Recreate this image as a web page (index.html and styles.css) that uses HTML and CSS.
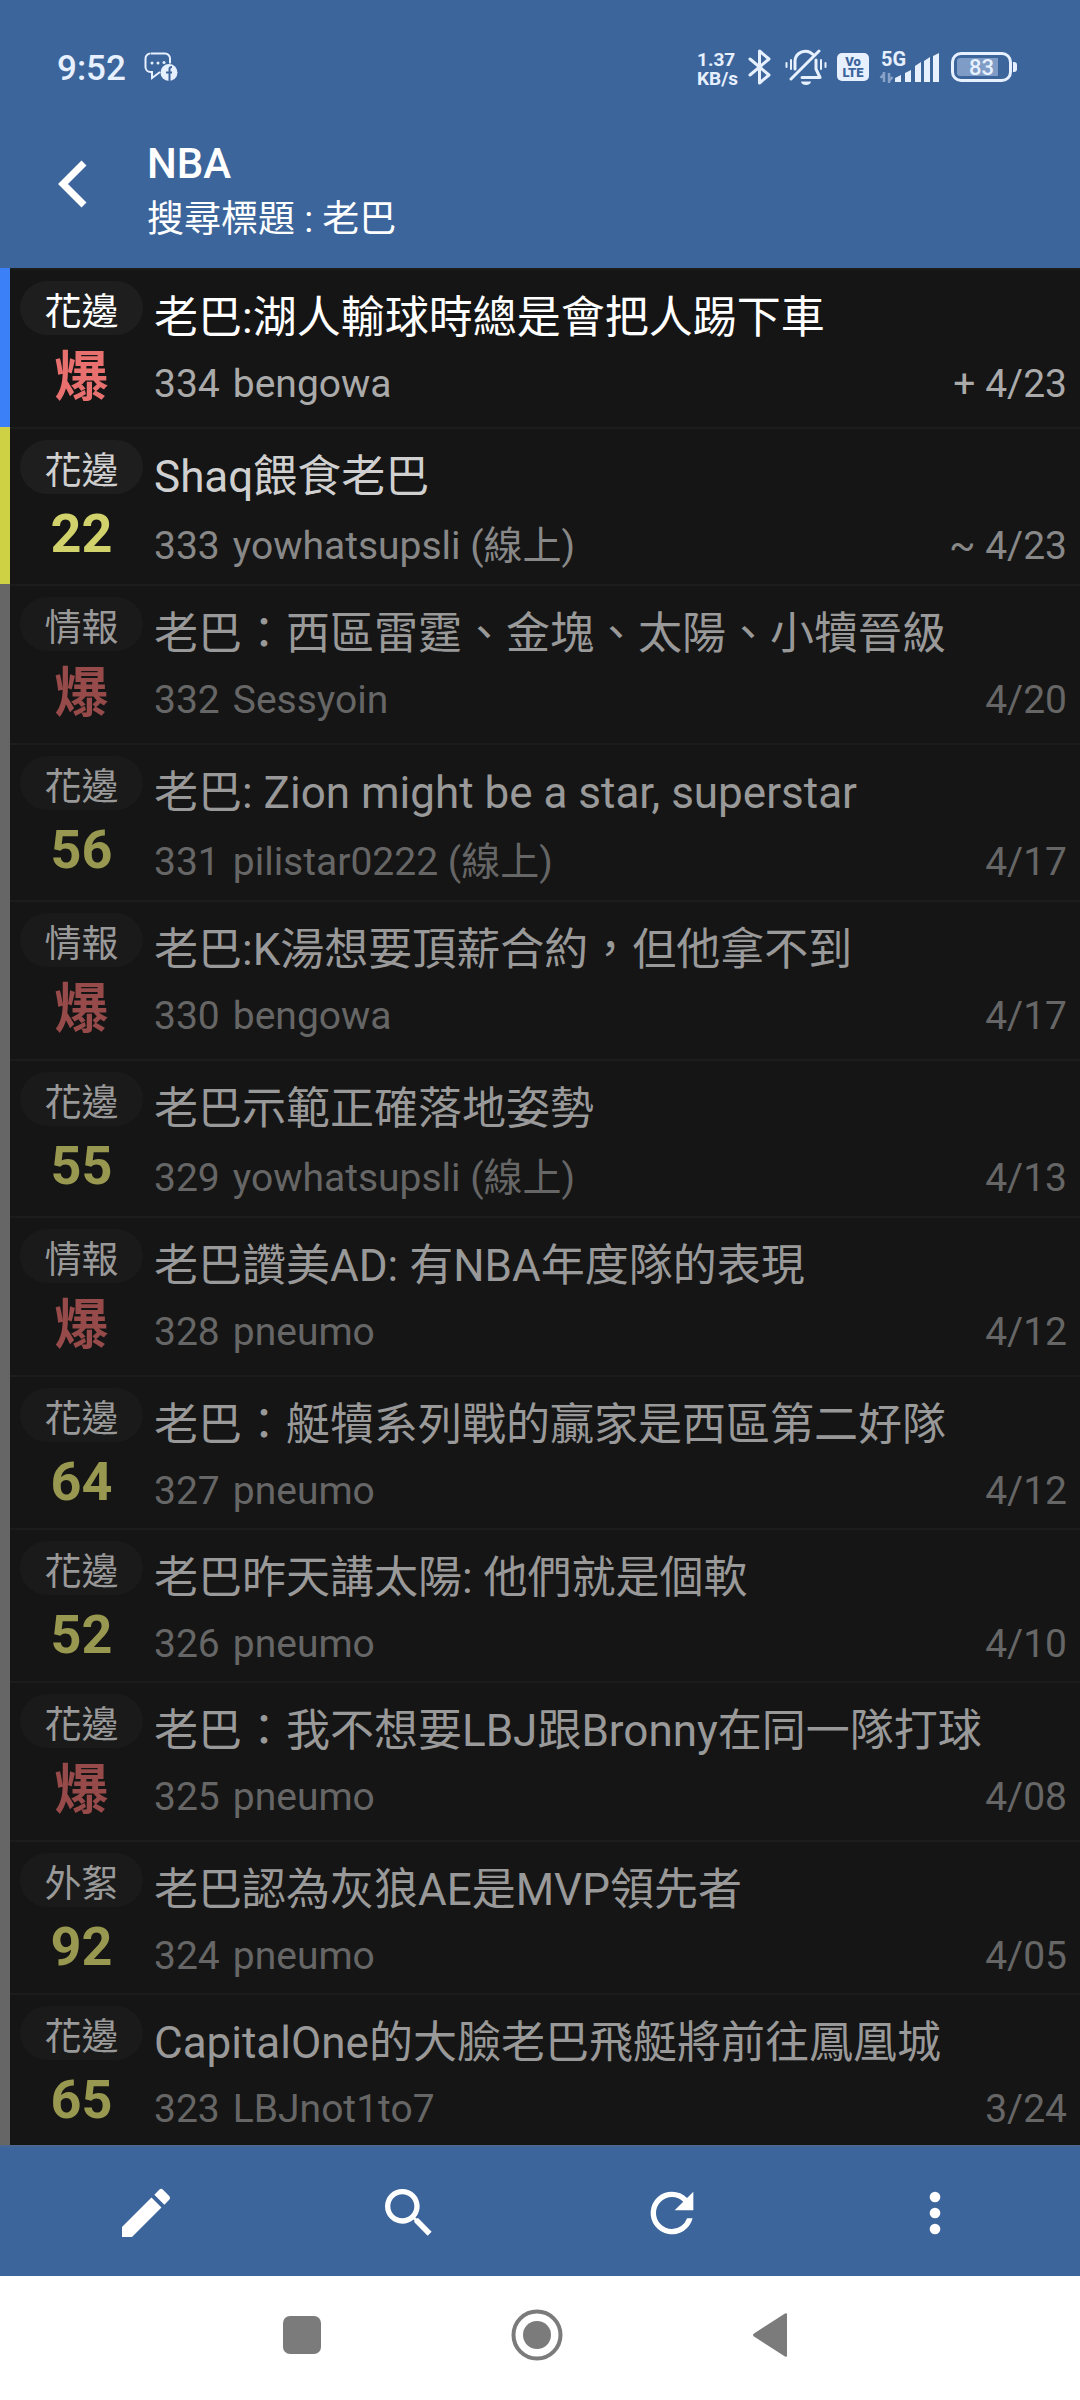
FILE: index.html
```html
<!DOCTYPE html>
<html lang="zh-Hant">
<head>
<meta charset="utf-8">
<meta name="viewport" content="width=device-width, initial-scale=1">
<title>NBA</title>
<link rel="stylesheet" href="styles.css">
</head>
<body>
<div class="app">
  <header class="header">
    <div class="status">
      <div class="status-left">
        <span class="clock">9:52</span>
        <svg class="chat" width="34" height="30" viewBox="0 0 34 30" aria-hidden="true">
          <path d="M7 1.500h14a5 5 0 0 1 5 5v5M16 20l-8 6v-6H6.500a5 5 0 0 1-5-5V6.500a5 5 0 0 1 5-5" fill="none" stroke="currentColor" stroke-width="2"/>
          <circle cx="8" cy="11" r="1.500"/><circle cx="14" cy="11" r="1.500"/><circle cx="20" cy="10.500" r="1.500"/>
          <circle cx="25" cy="20.500" r="8.500"/>
          <path d="M25.500 29v-12q0-2 2.500-2M22 20.500h6" fill="none" stroke="#3c659b" stroke-width="2"/>
        </svg>
      </div>
      <div class="status-right">
        <span class="speed"><span>1.37</span><span>KB/s</span></span>
        <svg class="line" width="27" height="38" viewBox="0 0 27 38" aria-hidden="true"><path d="M2 11l19 16-9.500 8V3L21 11 2 27" stroke-width="3"/></svg>
        <svg class="line" width="42" height="38" viewBox="0 0 42 38" aria-hidden="true">
          <path d="M10 21v-6.500a10.500 10.500 0 0 1 18-8M31 12v9l4 8.500H17M34 3L6 31" stroke-width="3"/>
          <path d="M1.500 15v4M6 12v9M36 12v9M40.500 15v4" stroke-width="2"/>
          <path d="M16 33.500h10a5 3.500 0 0 1-10 0z" fill="currentColor" stroke="none"/>
        </svg>
        <span class="volte"><span>Vo</span><span>LTE</span></span>
        <span class="signal">
          <span class="net">5G</span>
          <svg width="62" height="36" viewBox="0 0 62 36" aria-hidden="true">
            <path d="M5 23v10M1.500 29L5 25M10 24v10M10 32l3.500-4" stroke="currentColor" stroke-width="2.500" fill="none" opacity=".45"/>
            <path d="M16 29l6-3v7h-6zM26 24l6-3v12h-6zM36 17l6-4v20h-6zM45 12l6-4v25h-6zM54 7l6-3v29h-6z"/>
          </svg>
        </span>
        <span class="battery"><span class="battery-level">83</span></span>
      </div>
    </div>
    <div class="titlebar">
      <button class="back" type="button" aria-label="返回"><svg class="line" width="30" height="48" viewBox="0 0 30 48" aria-hidden="true"><path class="chevron" d="M27 3L6 24l21 21"/></svg></button>
      <div class="heading">
        <h1>NBA</h1>
        <p>搜尋標題 : 老巴</p>
      </div>
    </div>
  </header>

  <main class="list">
    <a class="row new" href="#334"><span class="side"><span class="tag">花邊</span><b class="score hot">爆</b></span><span class="main"><span class="title">老巴:湖人輸球時總是會把人踢下車</span><span class="meta"><span class="num">334</span><span>bengowa</span><span class="date">+ 4/23</span></span></span></a>
    <a class="row changed" href="#333"><span class="side"><span class="tag">花邊</span><b class="score">22</b></span><span class="main"><span class="title">Shaq餵食老巴</span><span class="meta online"><span class="num">333</span><span>yowhatsupsli (線上)</span><span class="date">~ 4/23</span></span></span></a>
    <a class="row" href="#332"><span class="side"><span class="tag">情報</span><b class="score hot">爆</b></span><span class="main"><span class="title">老巴：西區雷霆、金塊、太陽、小犢晉級</span><span class="meta"><span class="num">332</span><span>Sessyoin</span><span class="date">4/20</span></span></span></a>
    <a class="row" href="#331"><span class="side"><span class="tag">花邊</span><b class="score">56</b></span><span class="main"><span class="title">老巴: Zion might be a star, superstar</span><span class="meta online"><span class="num">331</span><span>pilistar0222 (線上)</span><span class="date">4/17</span></span></span></a>
    <a class="row" href="#330"><span class="side"><span class="tag">情報</span><b class="score hot">爆</b></span><span class="main"><span class="title">老巴:K湯想要頂薪合約，但他拿不到</span><span class="meta"><span class="num">330</span><span>bengowa</span><span class="date">4/17</span></span></span></a>
    <a class="row" href="#329"><span class="side"><span class="tag">花邊</span><b class="score">55</b></span><span class="main"><span class="title">老巴示範正確落地姿勢</span><span class="meta online"><span class="num">329</span><span>yowhatsupsli (線上)</span><span class="date">4/13</span></span></span></a>
    <a class="row" href="#328"><span class="side"><span class="tag">情報</span><b class="score hot">爆</b></span><span class="main"><span class="title">老巴讚美AD: 有NBA年度隊的表現</span><span class="meta"><span class="num">328</span><span>pneumo</span><span class="date">4/12</span></span></span></a>
    <a class="row" href="#327"><span class="side"><span class="tag">花邊</span><b class="score">64</b></span><span class="main"><span class="title">老巴：艇犢系列戰的贏家是西區第二好隊</span><span class="meta"><span class="num">327</span><span>pneumo</span><span class="date">4/12</span></span></span></a>
    <a class="row" href="#326"><span class="side"><span class="tag">花邊</span><b class="score">52</b></span><span class="main"><span class="title">老巴昨天講太陽: 他們就是個軟</span><span class="meta"><span class="num">326</span><span>pneumo</span><span class="date">4/10</span></span></span></a>
    <a class="row" href="#325"><span class="side"><span class="tag">花邊</span><b class="score hot">爆</b></span><span class="main"><span class="title">老巴：我不想要LBJ跟Bronny在同一隊打球</span><span class="meta"><span class="num">325</span><span>pneumo</span><span class="date">4/08</span></span></span></a>
    <a class="row" href="#324"><span class="side"><span class="tag">外絮</span><b class="score">92</b></span><span class="main"><span class="title">老巴認為灰狼AE是MVP領先者</span><span class="meta"><span class="num">324</span><span>pneumo</span><span class="date">4/05</span></span></span></a>
    <a class="row" href="#323"><span class="side"><span class="tag">花邊</span><b class="score">65</b></span><span class="main"><span class="title">CapitalOne的大臉老巴飛艇將前往鳳凰城</span><span class="meta"><span class="num">323</span><span>LBJnot1to7</span><span class="date">3/24</span></span></span></a>
  </main>

  <div class="toolbar">
    <button type="button" aria-label="發文"><svg viewBox="0 0 24 24" aria-hidden="true"><path d="M3 17.250V21h3.750L17.810 9.940l-3.750-3.750L3 17.250zM20.710 7.040a1 1 0 0 0 0-1.410l-2.340-2.340a1 1 0 0 0-1.410 0l-1.830 1.830 3.750 3.750 1.830-1.830z"/></svg></button>
    <button type="button" aria-label="搜尋"><svg viewBox="0 0 24 24" aria-hidden="true"><path d="M15.500 14h-.79l-.28-.27A6.471 6.471 0 0 0 16 9.500 6.500 6.500 0 1 0 9.500 16c1.610 0 3.090-.59 4.230-1.570l.27.28v.79l5 4.990L20.490 19l-4.990-5zm-6 0C7.010 14 5 11.990 5 9.500S7.010 5 9.500 5 14 7.010 14 9.500 11.990 14 9.500 14z"/></svg></button>
    <button type="button" aria-label="重新整理"><svg viewBox="0 0 24 24" aria-hidden="true"><path d="M17.650 6.350A7.958 7.958 0 0 0 12 4a8 8 0 1 0 7.730 10h-2.080A5.990 5.990 0 0 1 12 18a6 6 0 1 1 0-12c1.660 0 3.140.69 4.220 1.780L13 11h7V4l-2.350 2.350z"/></svg></button>
    <button type="button" aria-label="更多"><svg viewBox="0 0 24 24" aria-hidden="true"><path d="M12 8a2 2 0 1 0 0-4 2 2 0 0 0 0 4zm0 2a2 2 0 1 0 0 4 2 2 0 0 0 0-4zm0 6a2 2 0 1 0 0 4 2 2 0 0 0 0-4z"/></svg></button>
  </div>

  <nav class="navbar">
    <button type="button" aria-label="最近使用"><svg width="54" height="54" viewBox="0 0 54 54" aria-hidden="true"><rect x="8" y="8" width="38" height="38" rx="7"/></svg></button>
    <button type="button" aria-label="主畫面"><svg width="54" height="54" viewBox="0 0 54 54" aria-hidden="true"><circle cx="27" cy="27" r="23.500" fill="none" stroke="currentColor" stroke-width="4"/><circle cx="27" cy="27" r="14"/></svg></button>
    <button type="button" aria-label="返回上一頁"><svg width="54" height="54" viewBox="0 0 54 54" aria-hidden="true"><path d="M9 25.500L40 5.500q2-1 2 1v41q0 2-2 1L9 28.500q-2-1.500 0-3z"/></svg></button>
  </nav>
</div>
</body>
</html>
```

FILE: styles.css
```css
* { box-sizing: border-box; }

body {
  margin: 0;
  background: #151515;
  font-family: Roboto, "Noto Sans CJK TC", sans-serif;
}

button {
  display: grid;
  place-items: center;
  padding: 0;
  border: 0;
  background: none;
  color: inherit;
}

svg { display: block; fill: currentColor; }
svg.line {
  fill: none;
  stroke: currentColor;
  stroke-linecap: round;
  stroke-linejoin: round;
}

.app {
  display: flex;
  flex-direction: column;
  height: 100vh;
}

/* Header */
.header {
  flex: none;
  padding: 40px 68px 20px 57px;
  background: #3c659b;
  color: #fff;
}

.status {
  display: flex;
  justify-content: space-between;
  align-items: center;
  height: 54px;
  color: #e6f0ff;
}

.status-left, .status-right { display: flex; align-items: center; }
.status-left { gap: 18px; }
.status-right { gap: 10px; }
.clock { padding-top: 2px; font-size: 35px; font-weight: 500; }

.speed {
  display: flex;
  flex-direction: column;
  padding-top: 4px;
  font-size: 19px;
  font-weight: 700;
  line-height: 19px;
}

.volte {
  display: flex;
  flex-direction: column;
  align-items: center;
  width: 32px;
  padding: 3px 0;
  border-radius: 5px;
  background: #e6f0ff;
  color: #3c659b;
  font-size: 13px;
  font-weight: 900;
  line-height: 11px;
}

.signal { position: relative; }
.net {
  position: absolute;
  top: 0;
  left: 2px;
  font-size: 20px;
  font-weight: 700;
  line-height: 20px;
}

.battery {
  position: relative;
  width: 61px;
  padding: 3px;
  border: 3px solid #e6f0ff;
  border-radius: 10px;
}
.battery::after {
  content: "";
  position: absolute;
  top: 7px;
  right: -8px;
  width: 4px;
  height: 10px;
  border-radius: 0 3px 3px 0;
  background: #e6f0ff;
}
.battery-level {
  display: block;
  height: 18px;
  border-radius: 3px;
  background: linear-gradient(90deg, #7f9cc6 83%, transparent 83%);
  font-size: 22px;
  font-weight: 500;
  line-height: 20px;
  text-align: center;
}

.titlebar { display: flex; align-items: flex-start; gap: 60px; padding-top: 45px; }
.back { margin-top: 21px; }
.chevron { stroke-width: 7px; stroke-linecap: butt; stroke-linejoin: miter; }
.heading h1, .heading p { margin: 0; }
.heading h1 { font-size: 42px; font-weight: 500; line-height: 50px; }
.heading p { padding-top: 3px; font-size: 37px; line-height: 56px; }

/* Article list */
.list {
  flex: 1;
  min-height: 0;
  overflow-y: auto;
  scrollbar-width: none;
}

.row {
  --bar: #666;
  --pill: #1a1a1a;
  --strong: #999;
  --weak: #666;
  --count: #989850;
  --hot: #964a49;
  display: flex;
  gap: 11px;
  padding-right: 13px;
  border-left: 10px solid var(--bar);
  background: linear-gradient(#1c1c1c 2px, transparent 2px);
  color: var(--strong);
  text-decoration: none;
}
.row.new { --bar: #3b80f7; --pill: #1e1e1e; --strong: #fff; --weak: #aaa; --hot: #e8716f; }
.row.changed { --bar: #ced144; --pill: #1e1e1e; --strong: #d0d0d0; --weak: #888; --count: #d2d26c; }

.side { padding: 13px 0 6px 10px; }

.tag {
  display: block;
  width: 123px;
  height: 54px;
  border-radius: 27px;
  background: var(--pill);
  font-size: 37px;
  line-height: 64px;
  text-align: center;
}

.score {
  display: block;
  color: var(--count);
  font-size: 54px;
  line-height: 80px;
  text-align: center;
}
.score.hot { color: var(--hot); line-height: 86px; }

.main { flex: 1; min-width: 0; padding: 18px 0 1px; }
.title { display: block; font-size: 44px; line-height: 64px; white-space: nowrap; }
.meta {
  display: flex;
  gap: 13px;
  color: var(--weak);
  font-size: 39px;
  line-height: 68px;
}
.meta.online { line-height: 74px; }
.date { margin-left: auto; }

/* Bottom bars */
.toolbar {
  flex: none;
  display: grid;
  grid-template-columns: repeat(4, 1fr);
  padding: 34px 14px 31px;
  border-top: 2px solid #4a678f;
  background: #3c659b;
  color: #fff;
}
.toolbar svg { width: 64px; height: 64px; }

.navbar {
  flex: none;
  display: flex;
  justify-content: center;
  gap: 181px;
  padding: 32px 6px 38px 0;
  background: #fff;
  color: #7b7b7b;
}
```
